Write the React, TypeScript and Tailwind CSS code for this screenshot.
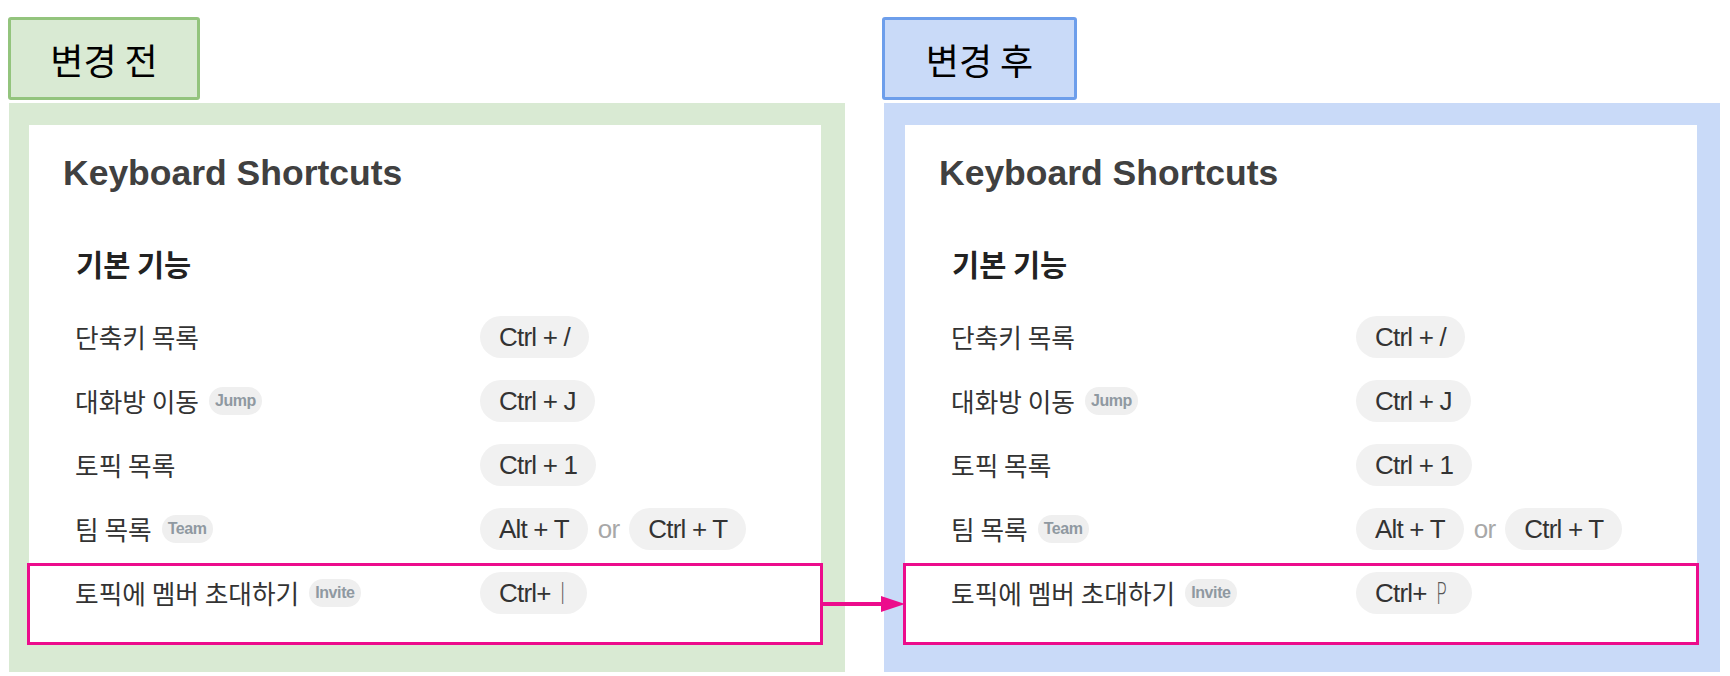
import React from 'react';

type Row = {
  label: string;
  badge?: string;
  keys: string[];
};

const ROWS: Row[] = [
  { label: '단축키 목록', keys: ['Ctrl + /'] },
  { label: '대화방 이동', badge: 'Jump', keys: ['Ctrl + J'] },
  { label: '토픽 목록', keys: ['Ctrl + 1'] },
  { label: '팀 목록', badge: 'Team', keys: ['Alt + T', 'Ctrl + T'] },
];

function Badge({ text }: { text: string }) {
  return (
    <span className="ml-[10px] inline-flex h-[28px] items-center rounded-full bg-[#efefef] px-[6px] font-['Liberation_Sans',sans-serif] text-[16px] font-bold tracking-[-0.4px] text-[#8f99a1]">
      {text}
    </span>
  );
}

function Key({ children }: { children: React.ReactNode }) {
  return (
    <span className="inline-flex h-[42px] items-center rounded-full bg-[#f1f1f1] px-[19px] font-['Liberation_Sans',sans-serif] text-[26px] tracking-[-0.8px] text-[#333]">
      {children}
    </span>
  );
}

function ShortcutRow({ row }: { row: Row }) {
  return (
    <div className="flex h-16 items-center">
      <div className="flex w-[405px] items-center">
        <span className="text-[25.7px] text-[#333]">{row.label}</span>
        {row.badge && <Badge text={row.badge} />}
      </div>
      <div className="flex items-center">
        {row.keys.map((k, i) => (
          <React.Fragment key={k}>
            {i > 0 && (
              <span className="mx-[10px] font-['Liberation_Sans',sans-serif] text-[26px] tracking-[-0.8px] text-[#a8a8a8]">or</span>
            )}
            <Key>{k}</Key>
          </React.Fragment>
        ))}
      </div>
    </div>
  );
}

function Panel({ after }: { after?: boolean }) {
  return (
    <div className="flex w-[836px] flex-col">
      <div
        className={
          after
            ? 'mt-[17px] -ml-[2px] flex h-[83px] w-[195px] items-center justify-center rounded-[3px] border-[3px] border-[#6d9eeb] bg-[#c9daf8]'
            : 'mt-[17px] -ml-[1px] flex h-[83px] w-[192px] items-center justify-center rounded-[3px] border-[3px] border-[#93c47d] bg-[#d9ead3]'
        }
      >
        <span className="text-[36px] text-black">{after ? '변경 후' : '변경 전'}</span>
      </div>

      <div className={after ? 'mt-[3px] h-[569px] bg-[#c9daf8] pl-[21px] pt-[22px]' : 'mt-[3px] h-[569px] bg-[#d9ead3] pl-[20px] pt-[22px]'}>
        <div className="relative h-[518px] w-[792px] bg-white pt-[28px] pb-[18px]">
          <h1 className="pl-[34px] font-['Liberation_Sans',sans-serif] text-[35.5px] leading-[40px] font-bold text-[#404040]">
            Keyboard Shortcuts
          </h1>
          <h2 className="mt-[52px] h-[36px] pl-[47px] text-[29.5px] leading-[36px] font-bold text-[#222]">기본 기능</h2>

          <div className="mt-[24px] pl-[46px]">
            {ROWS.map((r) => (
              <ShortcutRow key={r.label} row={r} />
            ))}
            <div className="flex h-16 items-center">
              <div className="flex w-[405px] items-center">
                <span className="text-[25.7px] text-[#333]">토픽에 멤버 초대하기</span>
                <Badge text="Invite" />
              </div>
              <Key>
                Ctrl+
                <span className="ml-[9px] inline-block origin-left scale-x-[0.6] font-['DejaVu_Sans',sans-serif] text-[30px] font-light text-[#555]">
                  {after ? 'P' : 'I'}
                </span>
              </Key>
            </div>
          </div>

          {/* highlight round the changed row */}
          <div className="absolute -right-[2px] -bottom-[2px] -left-[2px] top-[438px] border-[3px] border-[#ec0c8c]" />
        </div>
      </div>
    </div>
  );
}

export default function App() {
  return (
    <div className="relative h-[676px] w-[1730px] overflow-hidden bg-white font-['Noto_Sans_CJK_KR',sans-serif]">
      <div className="flex gap-[39px] pl-[9px]">
        <Panel />
        <Panel after />
      </div>

      <svg className="absolute top-[596px] left-[823px]" width="82" height="16" viewBox="0 0 82 16">
        <line x1="0" y1="8" x2="60" y2="8" stroke="#ec0c8c" strokeWidth="4" />
        <polygon points="58,0 82,8 58,16" fill="#ec0c8c" />
      </svg>
    </div>
  );
}
